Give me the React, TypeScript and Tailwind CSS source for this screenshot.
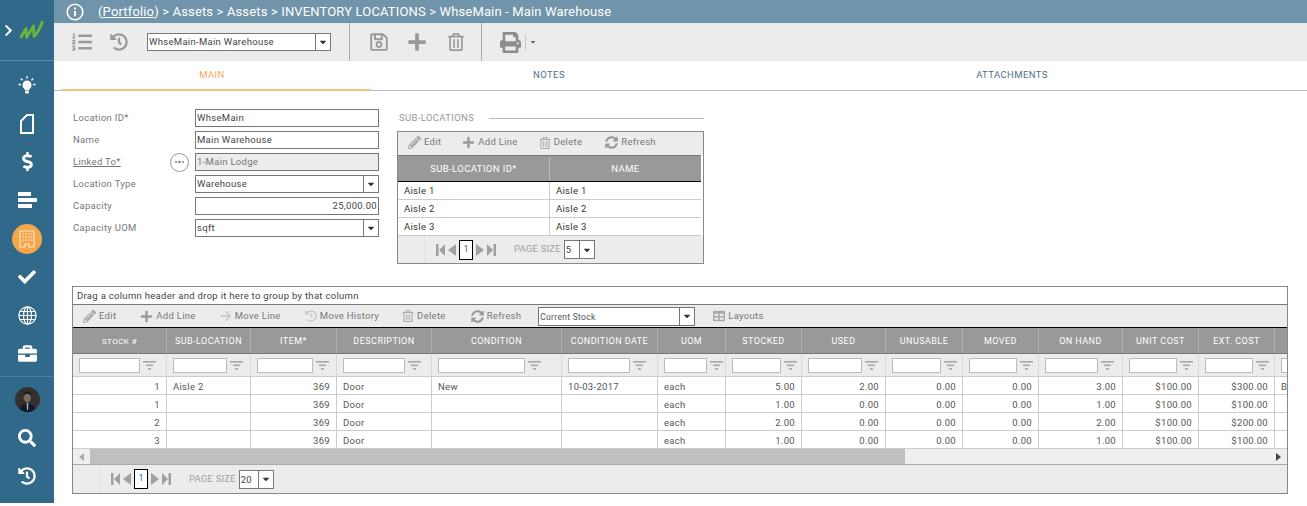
import React from "react";
import { FaListOl, FaHistory, FaRegSave, FaPlus, FaRegTrashAlt, FaPrint, FaDollarSign, FaCheck, FaBriefcase, FaSearch, FaPencilAlt, FaSyncAlt, FaArrowRight, FaCaretDown, FaTable, FaChevronRight } from "react-icons/fa";

const Caret = () => <FaCaretDown className="text-[10px] text-[#333]" />;

function Logo() {
  return (
    <svg width="25" height="20" viewBox="0 0 25 20" className="ml-[4px]">
      <path d="M1.5 18 L7 8.5 L7.5 17.5 L14.5 6 L15 16.5 Q20.5 11 23.5 1" fill="none" stroke="#6cb33f" strokeWidth="2.8" strokeLinejoin="round" />
    </svg>
  );
}

function Bulb() {
  return (
    <svg width="18" height="18" viewBox="0 0 18 18" fill="#fff">
      <path d="M9 4.5a4.6 4.6 0 0 0-3 8c.7.6 1 1.2 1 2h4c0-.8.3-1.4 1-2a4.6 4.6 0 0 0-3-8z" />
      <rect x="7" y="15" width="4" height="2.6" rx="1" />
      <path d="M9 0v2.5M2.8 2.5l1.8 1.8M15.2 2.5l-1.8 1.8M0.5 8.5H3M15 8.5h2.5" stroke="#fff" strokeWidth="1.3" />
    </svg>
  );
}

function FileIcon() {
  return (
    <svg width="14" height="20" viewBox="0 0 14 20" fill="none" stroke="#fff" strokeWidth="2">
      <path d="M1 7 L7 1 H13 V19 H1 Z" />
    </svg>
  );
}

function Bars() {
  return (
    <svg width="19" height="16" viewBox="0 0 19 16" fill="#fff">
      <rect x="0" y="0" width="13" height="4" />
      <rect x="0" y="6" width="19" height="4" />
      <rect x="0" y="12" width="14" height="4" />
    </svg>
  );
}

function Building() {
  return (
    <svg width="16" height="18" viewBox="0 0 16 18" fill="none">
      <path d="M1 1 H15 V17 H10 V14 H6 V17 H1 Z" stroke="#fde5c8" strokeWidth="1.2" />
      {[4, 7, 10].map((y) =>
        [4, 7, 10, 12.5].map((x) => <rect key={`${x}-${y}`} x={x - 0.6} y={y - 0.6} width="1.4" height="1.4" fill="#fde5c8" />)
      )}
    </svg>
  );
}

function Globe() {
  return (
    <svg width="19" height="19" viewBox="0 0 19 19" fill="none" stroke="#fff" strokeWidth="1.2">
      <circle cx="9.5" cy="9.5" r="8.6" />
      <ellipse cx="9.5" cy="9.5" rx="4" ry="8.6" />
      <path d="M9.5 1V18M1 9.5H18M2 5.5H17M2 13.5H17" />
    </svg>
  );
}

function Avatar() {
  return (
    <svg width="25" height="25" viewBox="0 0 25 25" className="rounded-full">
      <rect width="25" height="25" fill="#33302f" />
      <ellipse cx="12.3" cy="10.5" rx="3.6" ry="5" fill="#7d6a62" />
      <path d="M8.6 9 Q9 4.5 12.5 4.5 Q16 4.5 16.2 9 Q14 6.5 12.5 6.5 Q10.5 6.5 8.6 9 Z" fill="#1c1a1a" />
      <path d="M4 25 Q5 17.5 12.5 16 Q20 17.5 21 25 Z" fill="#14192a" />
      <path d="M11.6 16 L13.4 16 L13 23 L12 23 Z" fill="#aab0c0" />
    </svg>
  );
}

function FilterIcon() {
  return (
    <svg width="13" height="9" viewBox="0 0 13 9" fill="#a8a8a8" className="shrink-0">
      <rect x="0" y="0" width="13" height="1.6" />
      <rect x="3" y="3.5" width="7" height="1.6" />
      <rect x="5" y="7" width="3" height="1.6" />
    </svg>
  );
}

function Tool({ icon, label, cls }: { icon: React.ReactNode; label: string; cls: string }) {
  return (
    <div className={`flex items-center gap-[3px] text-[9.5px] text-[#777] tracking-[0.3px] ${cls}`}>
      {icon}
      <span>{label}</span>
    </div>
  );
}

function PagerArrow({ dir, bar }: { dir: "l" | "r"; bar?: boolean }) {
  const d = dir === "l"
    ? bar ? "M0 0H2.5V12H0Z M9 0V12L3 6Z" : "M8 0V12L0 6Z"
    : bar ? "M9 0H6.5V12H9Z M0 0V12L6 6Z" : "M0 0V12L8 6Z";
  return (
    <svg width={bar ? 9 : 8} height="12" viewBox={bar ? "0 0 9 12" : "0 0 8 12"} fill="#a0a0a0" className="shrink-0">
      <path d={d} />
    </svg>
  );
}

function Pager({ size, sizeW }: { size: string; sizeW: string }) {
  return (
    <div className="flex items-center h-full bg-[#ececec]">
      <div className="w-[27px] h-full border-r border-[#e2e2e2]" />
      <div className="flex items-center ml-[11px]">
        <PagerArrow dir="l" bar />
        <span className="w-[3px]" />
        <PagerArrow dir="l" />
        <div className="w-[14px] h-[20px] bg-white border border-black flex items-center justify-center text-[9px] text-[#2a6f9a] mx-[3px]">1</div>
        <PagerArrow dir="r" />
        <span className="w-[3px]" />
        <PagerArrow dir="r" bar />
      </div>
      <span className="ml-[18px] text-[9.5px] text-[#a0a0a0] tracking-[0.2px]">PAGE SIZE</span>
      <div className={`ml-[3px] h-[19px] bg-white border border-[#777] flex text-[9.5px] text-[#444] ${sizeW}`}>
        <span className="flex-1 pl-[1px] leading-[17px]">{size}</span>
        <div className="w-[15px] border-l border-[#777] flex items-center justify-center"><Caret /></div>
      </div>
    </div>
  );
}

function Field({ label, value, select, right, disabled, linked }: { label: string; value: string; select?: boolean; right?: boolean; disabled?: boolean; linked?: boolean }) {
  return (
    <div className="flex items-center h-[18px] mb-[4px]">
      <div className={`w-[97px] text-[9.5px] text-[#777] tracking-[0.3px] ${linked ? "underline" : ""}`}>{label}</div>
      <div className="w-[25px] flex justify-center">
        {linked && (
          <div className="w-[19px] h-[19px] rounded-full border border-[#999] bg-white flex items-center justify-center gap-[1px] ml-[-6px]">
            <i className="w-[2.5px] h-[2.5px] rounded-full bg-[#888]" />
            <i className="w-[2.5px] h-[2.5px] rounded-full bg-[#888]" />
            <i className="w-[2.5px] h-[2.5px] rounded-full bg-[#888]" />
          </div>
        )}
      </div>
      <div className={`w-[184px] h-[18px] border border-[#777] flex text-[9.5px] tracking-[0.3px] ${disabled ? "bg-[#ececec] text-[#777]" : "bg-white text-[#444]"}`}>
        <span className={`flex-1 px-[1px] leading-[16px] ${right ? "text-right" : ""}`}>{value}</span>
        {select && <div className="w-[15px] border-l border-[#777] flex items-center justify-center"><Caret /></div>}
      </div>
    </div>
  );
}

const cols = ["STOCK #", "SUB-LOCATION", "ITEM*", "DESCRIPTION", "CONDITION", "CONDITION DATE", "UOM", "STOCKED", "USED", "UNUSABLE", "MOVED", "ON HAND", "UNIT COST", "EXT. COST", ""];

const inputWidths = [61, 54, 56, 62, 87, 62, 43, 49, 54, 49, 48, 53, 48, 48, 0];

const alignRight = [true, false, true, false, false, false, false, true, true, true, true, true, true, true, false];

const rows = [
  ["1", "Aisle 2", "369", "Door", "New", "10-03-2017", "each", "5.00", "2.00", "0.00", "0.00", "3.00", "$100.00", "$300.00", "B"],
  ["1", "", "369", "Door", "", "", "each", "1.00", "0.00", "0.00", "0.00", "1.00", "$100.00", "$100.00", ""],
  ["2", "", "369", "Door", "", "", "each", "2.00", "0.00", "0.00", "0.00", "2.00", "$100.00", "$200.00", ""],
  ["3", "", "369", "Door", "", "", "each", "1.00", "0.00", "0.00", "0.00", "1.00", "$100.00", "$100.00", ""],
];

const gridCols = "grid grid-cols-[94px_84px_86px_95px_130px_96px_68px_76px_84px_77px_76px_84px_76px_76px_13px]";

function Side({ children, active }: { children: React.ReactNode; active?: boolean }) {
  return (
    <div className="h-[38.4px] flex items-center justify-center">
      {active ? <div className="w-[30px] h-[30px] rounded-full bg-[#f5a54a] flex items-center justify-center">{children}</div> : children}
    </div>
  );
}

export default function App() {
  return (
    <div className="flex w-[1307px] h-[506px] overflow-hidden bg-white font-['Roboto',sans-serif]">
      <aside className="w-[54px] h-[503px] shrink-0 bg-[#30698a] flex flex-col text-white">
        <div className="h-[61px] flex items-center pl-[2px] border-b border-[#5f8aa5] shrink-0">
          <FaChevronRight className="text-[13px]" />
          <Logo />
        </div>
        <div className="pt-[5px] pb-[3px] flex flex-col border-b border-[#4d7e9b] shrink-0">
          <Side><Bulb /></Side>
          <Side><FileIcon /></Side>
          <Side><FaDollarSign className="text-[19px]" /></Side>
          <Side><Bars /></Side>
          <Side active><Building /></Side>
          <Side><FaCheck className="text-[18px]" /></Side>
          <Side><Globe /></Side>
          <Side><FaBriefcase className="text-[19px]" /></Side>
        </div>
        <div className="pt-[3px] flex flex-col">
          <Side><Avatar /></Side>
          <Side><FaSearch className="text-[18px]" /></Side>
          <Side><FaHistory className="text-[18px]" /></Side>
        </div>
      </aside>

      <main className="flex-1 min-w-0">
        <header className="h-[23px] bg-[#7094aa] flex items-center text-white pl-[12px]">
          <svg width="18" height="18" viewBox="0 0 18 18" fill="none" stroke="#fff" strokeWidth="1.6">
            <circle cx="9" cy="9" r="7.8" />
            <path d="M9 8v5.2M9 4.6v1.8" strokeWidth="2" />
          </svg>
          <div className="ml-[14px] text-[13px] tracking-[0.15px]"><span>(<span className="underline">Portfolio</span>)</span> &gt; Assets &gt; Assets &gt; INVENTORY LOCATIONS &gt; WhseMain - Main Warehouse</div>
        </header>

        <div className="h-[38px] bg-[#ececec] flex items-center text-[#999]">
          <FaListOl className="ml-[18px] text-[20px]" />
          <FaHistory className="ml-[18px] text-[18px]" />
          <div className="ml-[19px] w-[184px] h-[18px] bg-white border border-[#777] flex text-[9.5px] text-[#444] tracking-[0.3px]">
            <span className="flex-1 pl-[1px] leading-[16px]">WhseMain-Main Warehouse</span>
            <div className="w-[15px] border-l border-[#777] flex items-center justify-center"><Caret /></div>
          </div>
          <div className="ml-[18px] h-full w-px bg-[#aaa]" />
          <FaRegSave className="ml-[19px] text-[20px]" />
          <FaPlus className="ml-[18px] text-[20px]" />
          <FaRegTrashAlt className="ml-[20px] text-[18px]" />
          <div className="ml-[16px] h-full w-px bg-[#aaa]" />
          <FaPrint className="ml-[18px] text-[21px] text-[#8c8c8c]" />
          <div className="ml-[4px] h-[16px] w-px bg-[#c5c8d0]" />
          <FaCaretDown className="ml-[3px] text-[8px] text-[#5b6b90]" />
        </div>

        <nav className="flex h-[30px] border-b-[1.5px] border-[#bbb] text-[9.5px] tracking-[0.4px] text-[#4f7287]">
          <div className="ml-[7px] w-[310px] shrink-0 h-[30px] border-b-[2px] border-[#f7c27f] flex items-center justify-center text-[#f5a866] pr-[8px]">MAIN</div>
          <div className="w-[356px] shrink-0 flex items-center justify-center">NOTES</div>
          <div className="w-[570px] shrink-0 flex items-center justify-center">ATTACHMENTS</div>
        </nav>

        <section className="flex pl-[19px] pt-[18px] h-[195px]">
          <div className="w-[306px]">
            <Field label="Location ID*" value="WhseMain" />
            <Field label="Name" value="Main Warehouse" />
            <Field label="Linked To*" value="1-Main Lodge" disabled linked />
            <Field label="Location Type" value="Warehouse" select />
            <Field label="Capacity" value="25,000.00" right />
            <Field label="Capacity UOM" value="sqft" select />
          </div>
          <div className="ml-[18px] w-[307px]">
            <div className="flex items-center h-[18px] pl-[2px] text-[9.5px] text-[#999] tracking-[0.35px]">
              <span>SUB-LOCATIONS</span>
              <div className="ml-[15px] flex-1 h-px bg-[#bbb]" />
            </div>
            <div className="mt-[4px] h-[133px] border border-[#888] flex flex-col">
              <div className="h-[23px] pb-[2px] bg-[#ececec] flex items-center shrink-0">
                <Tool icon={<FaPencilAlt className="text-[13px] text-[#aaa]" />} label="Edit" cls="ml-[10px]" />
                <Tool icon={<FaPlus className="text-[13px] text-[#999]" />} label="Add Line" cls="ml-[21px]" />
                <Tool icon={<FaRegTrashAlt className="text-[12px] text-[#aaa]" />} label="Delete" cls="ml-[21px]" />
                <Tool icon={<FaSyncAlt className="text-[13px] text-[#999]" />} label="Refresh" cls="ml-[23px]" />
              </div>
              <div className="flex h-[27px] pt-[1px] bg-[#999] border-t border-[#777] border-b-[1.5px] border-b-black mr-[2px] text-white text-[9.5px] tracking-[0.4px] shrink-0">
                <div className="w-[152px] border-r border-[#bbb] flex items-center justify-center">SUB-LOCATION ID*</div>
                <div className="flex-1 flex items-center justify-center">NAME</div>
              </div>
              {["Aisle 1", "Aisle 2", "Aisle 3"].map((a) => (
                <div key={a} className="flex h-[18px] mr-[2px] border-b border-[#ccc] text-[9.5px] text-[#333] tracking-[0.3px] leading-[17px] shrink-0">
                  <div className="w-[152px] pl-[6px] border-r border-[#ccc]">{a}</div>
                  <div className="flex-1 pl-[6px]">{a}</div>
                </div>
              ))}
              <div className="flex-1 min-h-0 bg-[#ececec]">
                <Pager size="5" sizeW="w-[31px]" />
              </div>
            </div>
          </div>
        </section>

        <section className="ml-[18px] w-[1216px] h-[208px] border border-[#888] flex flex-col overflow-hidden">
          <div className="h-[18px] border-b border-[#777] bg-white text-[9.5px] text-[#444] tracking-[0.3px] pl-[4px] leading-[17px] shrink-0">Drag a column header and drop it here to group by that column</div>
          <div className="h-[22px] bg-[#ececec] flex items-center shrink-0">
            <Tool icon={<FaPencilAlt className="text-[13px] text-[#aaa]" />} label="Edit" cls="ml-[10px]" />
            <Tool icon={<FaPlus className="text-[13px] text-[#999]" />} label="Add Line" cls="ml-[24px]" />
            <Tool icon={<FaArrowRight className="text-[12px] text-[#ccc]" />} label="Move Line" cls="ml-[24px]" />
            <Tool icon={<FaHistory className="text-[12px] text-[#ccc]" />} label="Move History" cls="ml-[24px]" />
            <Tool icon={<FaRegTrashAlt className="text-[12px] text-[#aaa]" />} label="Delete" cls="ml-[23px]" />
            <Tool icon={<FaSyncAlt className="text-[13px] text-[#999]" />} label="Refresh" cls="ml-[25px]" />
            <div className="ml-[17px] w-[157px] h-[19px] bg-white border border-[#777] flex text-[8.5px] text-[#555] tracking-[0.3px]">
              <span className="flex-1 pl-[1px] leading-[18px]">Current Stock</span>
              <div className="w-[15px] border-l border-[#777] flex items-center justify-center"><Caret /></div>
            </div>
            <Tool icon={<FaTable className="text-[12px] text-[#aaa]" />} label="Layouts" cls="ml-[18px]" />
          </div>
          <div className={`${gridCols} h-[27px] bg-[#999] border-t border-black border-b border-b-[#777] text-white tracking-[0.45px] shrink-0`}>
            {cols.map((c, i) => (
              <div key={i} className={`border-r border-[#b0b0b0] pt-[2px] flex items-center justify-center whitespace-nowrap overflow-hidden ${i === 0 ? "text-[8px]" : "text-[9px]"}`}>{c}</div>
            ))}
          </div>
          <div className={`${gridCols} h-[23px] bg-[#ececec] border-b border-[#ccc] shrink-0`}>
            {cols.map((c, i) => (
              <div key={i} className="border-r border-[#d8d8d8] flex items-center pl-[6px] gap-[3px] overflow-hidden">
                {inputWidths[i] > 0 ? (
                  <>
                    <div className="h-[15px] bg-white border border-[#bbb] shrink-0" style={{ width: inputWidths[i] }} />
                    <FilterIcon />
                  </>
                ) : (
                  <div className="h-[15px] w-[20px] bg-white border border-[#bbb] shrink-0" />
                )}
              </div>
            ))}
          </div>
          {rows.map((r, ri) => (
            <div key={ri} className={`${gridCols} h-[18px] border-b border-[#ccc] text-[9.5px] text-[#555] tracking-[0.3px] shrink-0`}>
              {r.map((v, i) => (
                <div key={i} className={`border-r border-[#ccc] px-[6px] pt-[2px] leading-[15px] whitespace-nowrap overflow-hidden ${alignRight[i] ? "text-right" : "text-left"}`}>{v}</div>
              ))}
            </div>
          ))}
          <div className="h-[16px] bg-[#efefef] border-b border-[#aaa] flex items-center shrink-0">
            <div className="w-[17px] flex justify-center"><svg width="5" height="8" viewBox="0 0 5 8" fill="#aaa"><path d="M5 0V8L0 4Z" /></svg></div>
            <div className="w-[815px] h-[15px] bg-[#bfbfbf]" />
            <div className="flex-1" />
            <svg width="5" height="8" viewBox="0 0 5 8" fill="#444" className="mr-[6px]"><path d="M0 0V8L5 4Z" /></svg>
          </div>
          <div className="flex-1 min-h-0 bg-[#ececec]">
            <Pager size="20" sizeW="w-[35px]" />
          </div>
        </section>
      </main>
    </div>
  );
}
